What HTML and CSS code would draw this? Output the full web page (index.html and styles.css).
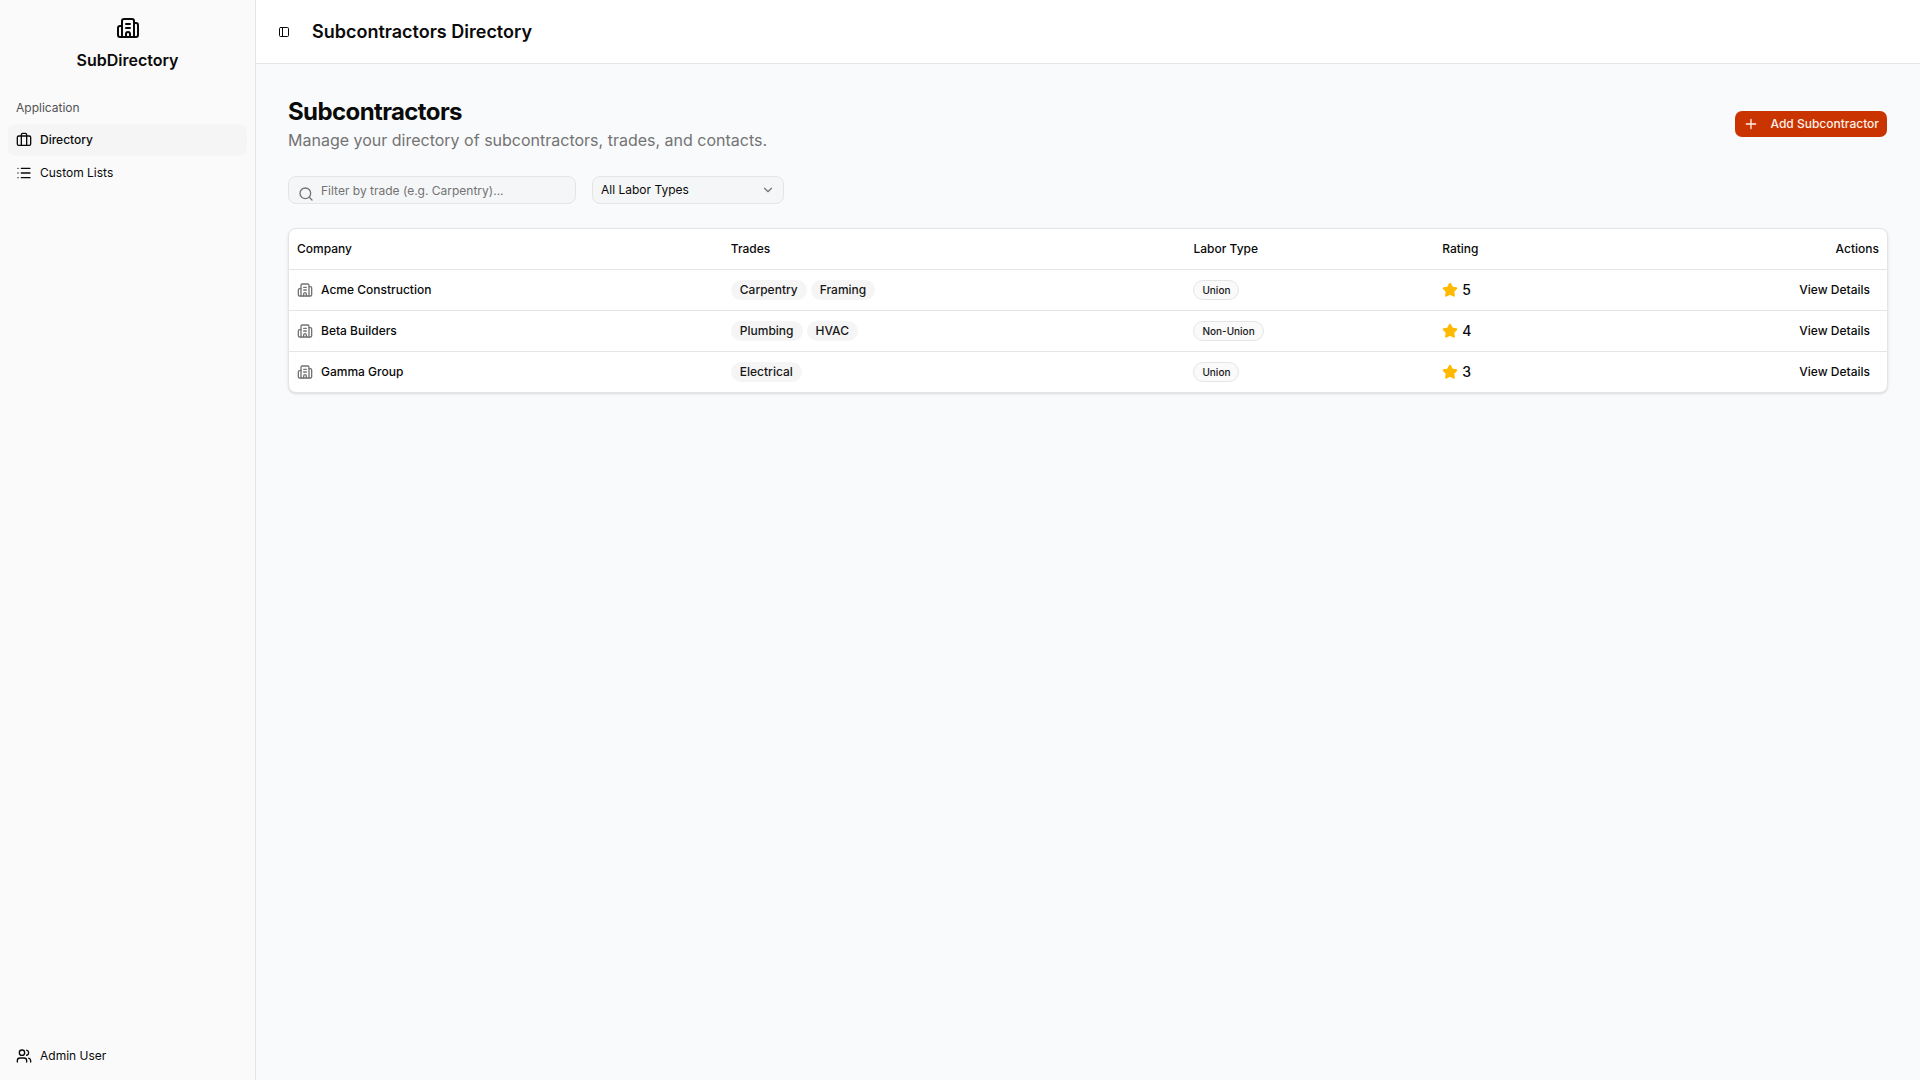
FILE: index.html
```html
<!DOCTYPE html>
<html lang="en">

<head>
  <meta charset="UTF-8">
  <meta name="viewport" content="width=device-width, initial-scale=1.0">
  <title>Subcontractors Directory</title>
  <link rel="stylesheet" href="styles.css">
</head>

<body>
  <svg class="sprite" aria-hidden="true">
    <symbol id="building" viewBox="0 0 24 24">
      <path d="M10 12h4M10 8h4M14 21v-3a2 2 0 0 0-4 0v3" />
      <path d="M6 10H4a2 2 0 0 0-2 2v7a2 2 0 0 0 2 2h16a2 2 0 0 0 2-2V9a2 2 0 0 0-2-2h-2" />
      <path d="M6 21V5a2 2 0 0 1 2-2h8a2 2 0 0 1 2 2v16" />
    </symbol>
    <symbol id="star" viewBox="0 0 24 24">
      <path d="M11.525 2.295a.53.53 0 0 1 .95 0l2.31 4.679a2.123 2.123 0 0 0 1.595 1.16l5.166.756a.53.53 0 0 1 .294.904l-3.736 3.638a2.123 2.123 0 0 0-.611 1.878l.882 5.14a.53.53 0 0 1-.771.56l-4.618-2.428a2.122 2.122 0 0 0-1.973 0L6.396 21.01a.53.53 0 0 1-.77-.56l.881-5.139a2.122 2.122 0 0 0-.611-1.879L2.16 9.795a.53.53 0 0 1 .294-.906l5.165-.755a2.122 2.122 0 0 0 1.597-1.16z" />
    </symbol>
  </svg>

  <div class="layout">
    <aside class="sidebar">
      <div class="brand">
        <svg class="icon icon-lg"><use href="#building" /></svg>
        <span>SubDirectory</span>
      </div>
      <nav class="nav">
        <div class="nav-label">Application</div>
        <a class="nav-item active" href="#">
          <svg class="icon" viewBox="0 0 24 24">
            <path d="M16 20V4a2 2 0 0 0-2-2h-4a2 2 0 0 0-2 2v16" />
            <rect width="20" height="14" x="2" y="6" rx="2" />
          </svg>
          Directory
        </a>
        <a class="nav-item" href="#">
          <svg class="icon" viewBox="0 0 24 24">
            <path d="M3 5h.01M3 12h.01M3 19h.01M8 5h13M8 12h13M8 19h13" />
          </svg>
          Custom Lists
        </a>
      </nav>
      <div class="sidebar-footer">
        <a class="nav-item" href="#">
          <svg class="icon" viewBox="0 0 24 24">
            <path d="M16 21v-2a4 4 0 0 0-4-4H6a4 4 0 0 0-4 4v2M16 3.128a4 4 0 0 1 0 7.744M22 21v-2a4 4 0 0 0-3-3.87" />
            <circle cx="9" cy="7" r="4" />
          </svg>
          Admin User
        </a>
      </div>
    </aside>

    <div class="content">
      <header class="topbar">
        <button class="toggle" type="button" aria-label="Toggle sidebar">
          <svg class="icon icon-sm" viewBox="0 0 24 24">
            <rect width="18" height="18" x="3" y="3" rx="2" />
            <path d="M9 3v18" />
          </svg>
        </button>
        <h1>Subcontractors Directory</h1>
      </header>

      <main>
        <div class="page-head">
          <div>
            <h2>Subcontractors</h2>
            <p>Manage your directory of subcontractors, trades, and contacts.</p>
          </div>
          <button class="add-btn" type="button">
            <svg class="icon" viewBox="0 0 24 24">
              <path d="M5 12h14M12 5v14" />
            </svg>
            Add Subcontractor
          </button>
        </div>

        <div class="filters">
          <div class="search">
            <svg class="icon" viewBox="0 0 24 24">
              <path d="m21 21-4.34-4.34" />
              <circle cx="11" cy="11" r="8" />
            </svg>
            <input type="text" aria-label="Filter by trade" placeholder="Filter by trade (e.g. Carpentry)...">
          </div>
          <div class="select">
            <select aria-label="Labor type">
              <option>All Labor Types</option>
              <option>Union</option>
              <option>Non-Union</option>
            </select>
            <svg class="icon icon-md" viewBox="0 0 24 24">
              <path d="m6 9 6 6 6-6" />
            </svg>
          </div>
        </div>

        <div class="card">
          <table>
            <thead>
              <tr>
                <th>Company</th>
                <th>Trades</th>
                <th>Labor Type</th>
                <th>Rating</th>
                <th class="right">Actions</th>
              </tr>
            </thead>
            <tbody>
              <tr>
                <td>
                  <div class="company"><svg class="icon"><use href="#building" /></svg>Acme Construction</div>
                </td>
                <td>
                  <div class="trades"><span class="tag">Carpentry</span><span class="tag">Framing</span></div>
                </td>
                <td><span class="tag outline">Union</span></td>
                <td>
                  <div class="rating"><svg class="icon"><use href="#star" /></svg>5</div>
                </td>
                <td class="right"><button class="view-btn" type="button">View Details</button></td>
              </tr>
              <tr>
                <td>
                  <div class="company"><svg class="icon"><use href="#building" /></svg>Beta Builders</div>
                </td>
                <td>
                  <div class="trades"><span class="tag">Plumbing</span><span class="tag">HVAC</span></div>
                </td>
                <td><span class="tag outline">Non-Union</span></td>
                <td>
                  <div class="rating"><svg class="icon"><use href="#star" /></svg>4</div>
                </td>
                <td class="right"><button class="view-btn" type="button">View Details</button></td>
              </tr>
              <tr>
                <td>
                  <div class="company"><svg class="icon"><use href="#building" /></svg>Gamma Group</div>
                </td>
                <td>
                  <div class="trades"><span class="tag">Electrical</span></div>
                </td>
                <td><span class="tag outline">Union</span></td>
                <td>
                  <div class="rating"><svg class="icon"><use href="#star" /></svg>3</div>
                </td>
                <td class="right"><button class="view-btn" type="button">View Details</button></td>
              </tr>
            </tbody>
          </table>
        </div>
      </main>
    </div>
  </div>
</body>

</html>
```
FILE: styles.css
```css
* {
  box-sizing: border-box;
}

body {
  margin: 0;
  font-family: Inter, "Liberation Sans", sans-serif;
  font-size: 12px;
  line-height: 16px;
  color: #0a0a0a;
}

h1,
h2,
p {
  margin: 0;
}

button,
input,
select {
  font: inherit;
  color: inherit;
}

.sprite {
  display: none;
}

.icon {
  width: 16px;
  height: 16px;
  flex-shrink: 0;
  fill: none;
  stroke: currentColor;
  stroke-width: 2;
  stroke-linecap: round;
  stroke-linejoin: round;
}

.icon-sm {
  width: 12px;
  height: 12px;
}

.icon-md {
  width: 14px;
  height: 14px;
}

.icon-lg {
  width: 24px;
  height: 24px;
}

.layout {
  display: flex;
  min-height: 100vh;
}

/* sidebar */
.sidebar {
  display: flex;
  flex-direction: column;
  flex-shrink: 0;
  width: 256px;
  background: #fafafa;
  border-right: 1px solid #e5e5e5;
}

.brand {
  display: flex;
  flex-direction: column;
  align-items: center;
  gap: 8px;
  padding: 16px 16px 12px;
  font-size: 16px;
  font-weight: 600;
  line-height: 24px;
}

.nav {
  display: flex;
  flex-direction: column;
  flex: 1;
  gap: 1px;
  padding: 8px;
}

.nav-label {
  padding: 8px 8px 7px;
  color: #525252;
}

.nav-item {
  display: flex;
  align-items: center;
  gap: 8px;
  height: 32px;
  padding: 0 8px;
  border-radius: 8px;
  color: #0a0a0a;
  text-decoration: none;
}

.nav-item.active {
  background: #f5f5f5;
  font-weight: 500;
}

.sidebar-footer {
  padding: 8px;
}

/* content */
.content {
  flex: 1;
  min-width: 0;
  background: #f9fafc;
}

.topbar {
  display: flex;
  align-items: center;
  gap: 16px;
  height: 64px;
  padding: 0 16px;
  background: #fff;
  border-bottom: 1px solid #e5e5e5;
}

.topbar h1 {
  font-size: 18px;
  font-weight: 600;
  line-height: 28px;
}

.toggle {
  display: flex;
  align-items: center;
  justify-content: center;
  width: 24px;
  height: 24px;
  padding: 0;
  border: 0;
  background: none;
}

main {
  display: flex;
  flex-direction: column;
  gap: 24px;
  padding: 32px;
}

.page-head {
  display: flex;
  align-items: center;
  justify-content: space-between;
}

.page-head h2 {
  font-size: 24px;
  font-weight: 700;
  line-height: 32px;
  letter-spacing: -0.025em;
}

.page-head p {
  font-size: 16px;
  line-height: 24px;
  color: #737373;
}

.add-btn {
  display: flex;
  align-items: center;
  gap: 12px;
  height: 28px;
  padding: 0 8px;
  border: 1px solid transparent;
  border-radius: 8px;
  background: #c93400;
  background-clip: padding-box;
  color: #fff1e8;
  font-weight: 500;
}

.filters {
  display: flex;
  gap: 16px;
}

.search {
  position: relative;
  width: 288px;
}

.search .icon {
  position: absolute;
  top: 10px;
  left: 10px;
  color: #737373;
}

.search input,
.select select {
  display: block;
  width: 100%;
  height: 28px;
  border: 1px solid #e5e5e5;
  border-radius: 8px;
  background: #f5f6f7;
}

.search input {
  padding: 0 8px 0 32px;
}

.search input::placeholder {
  color: #737373;
}

.select {
  position: relative;
  width: 192px;
}

.select select {
  appearance: none;
  padding: 0 32px 0 8px;
}

.select .icon {
  position: absolute;
  top: 7px;
  right: 9px;
  color: #737373;
  pointer-events: none;
}

/* table */
.card {
  overflow: hidden;
  border: 1px solid #e5e5e5;
  border-radius: 8px;
  background: #fff;
  box-shadow: 0 1px 3px rgba(0, 0, 0, 0.1), 0 1px 2px -1px rgba(0, 0, 0, 0.1);
}

table {
  width: 100%;
  border-collapse: collapse;
}

th,
td {
  padding: 0 8px;
  text-align: left;
  font-weight: 500;
  white-space: nowrap;
}

th {
  height: 40px;
}

td {
  height: 41px;
}

tr {
  border-bottom: 1px solid #e5e5e5;
}

tbody tr:last-child {
  border-bottom: 0;
}

.right {
  text-align: right;
}

.company,
.trades,
.rating {
  display: flex;
  align-items: center;
}

.company {
  gap: 8px;
}

.company .icon {
  color: #737373;
}

.trades {
  gap: 4px;
}

.tag {
  display: inline-flex;
  align-items: center;
  height: 20px;
  padding: 0 9px;
  border-radius: 10px;
  background: #f5f5f5;
  color: #171717;
}

.tag.outline {
  padding: 0 8px;
  border: 1px solid #e5e5e5;
  background: #fafafa;
  font-size: 10px;
}

.rating {
  gap: 4px;
  font-size: 14px;
}

.rating .icon {
  color: #ffb900;
  fill: currentColor;
}

.view-btn {
  height: 24px;
  padding: 0 9px;
  border: 0;
  background: none;
  font-weight: 500;
}
```
